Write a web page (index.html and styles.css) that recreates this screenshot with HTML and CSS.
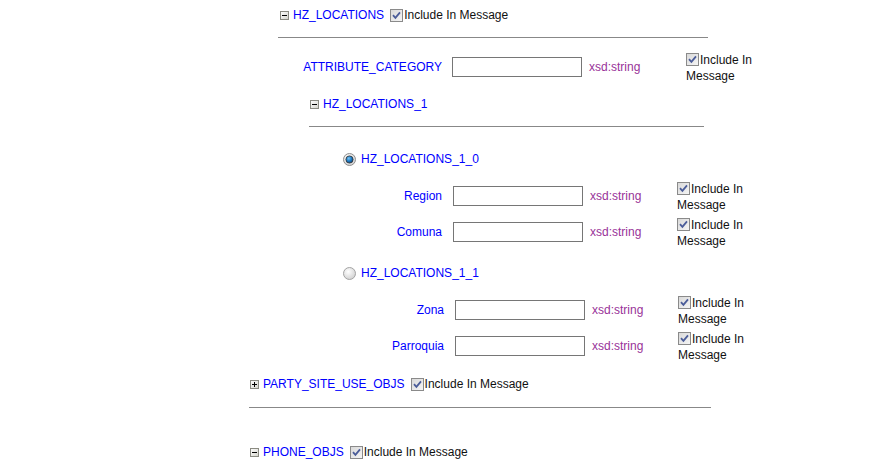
FILE: index.html
```html
<!DOCTYPE html>
<html lang="en">
<head>
  <meta charset="UTF-8">
  <title>Message Tester</title>
  <link rel="stylesheet" href="styles.css">
</head>
<body>
  <svg class="sprites" xmlns="http://www.w3.org/2000/svg">
    <defs>
      <linearGradient id="g-box" x1="0" y1="0" x2="1" y2="1">
        <stop offset="0" stop-color="#ffffff"/>
        <stop offset="1" stop-color="#d4d4cc"/>
      </linearGradient>
      <linearGradient id="g-check" x1="0" y1="0" x2="1" y2="1">
        <stop offset="0" stop-color="#d8d8d8"/>
        <stop offset="1" stop-color="#f6f6f6"/>
      </linearGradient>
      <radialGradient id="g-radio" cx="0.4" cy="0.35" r="0.7">
        <stop offset="0" stop-color="#ffffff"/>
        <stop offset="1" stop-color="#cfcfcf"/>
      </radialGradient>
      <radialGradient id="g-dot" cx="0.4" cy="0.35" r="0.7">
        <stop offset="0" stop-color="#7cc4f4"/>
        <stop offset="0.5" stop-color="#1f7fc8"/>
        <stop offset="1" stop-color="#0b3f75"/>
      </radialGradient>
      <symbol id="minus" viewBox="0 0 9 9">
        <rect x="0.5" y="0.5" width="8" height="8" fill="url(#g-box)" stroke="#8b8b82"/>
        <path d="M2 4.5H7" stroke="#000" stroke-width="1"/>
      </symbol>
      <symbol id="plus" viewBox="0 0 9 9">
        <rect x="0.5" y="0.5" width="8" height="8" fill="url(#g-box)" stroke="#8b8b82"/>
        <path d="M2 4.5H7M4.5 2V7" stroke="#000" stroke-width="1"/>
      </symbol>
      <symbol id="check" viewBox="0 0 13 13">
        <rect x="0.5" y="0.5" width="12" height="12" fill="url(#g-check)" stroke="#8a8a8a"/>
        <path d="M3 6.2L5.4 8.8L10 3.4" fill="none" stroke="#4a5c99" stroke-width="1.8"/>
      </symbol>
      <symbol id="radio-on" viewBox="0 0 13 13">
        <circle cx="6.5" cy="6.5" r="6" fill="url(#g-radio)" stroke="#8e8e8e"/>
        <circle cx="6.5" cy="6.5" r="3.6" fill="url(#g-dot)" stroke="#333" stroke-width="0.8"/>
      </symbol>
      <symbol id="radio-off" viewBox="0 0 13 13">
        <circle cx="6.5" cy="6.5" r="6" fill="url(#g-radio)" stroke="#a3a3a3"/>
      </symbol>
    </defs>
  </svg>

  <div class="tree">
    <div class="node lvl1">
      <div class="node-head">
        <svg class="toggle"><use href="#minus"/></svg>
        <span class="name">HZ_LOCATIONS</span>
        <span class="include"><svg class="check"><use href="#check"/></svg>Include In Message</span>
      </div>
      <div class="rule"></div>

      <div class="field attr">
        <span class="field-name">ATTRIBUTE_CATEGORY</span>
        <input type="text" class="field-input">
        <span class="field-type">xsd:string</span>
        <span class="field-include"><svg class="check"><use href="#check"/></svg>Include In Message</span>
      </div>

      <div class="node lvl2">
        <div class="node-head">
          <svg class="toggle"><use href="#minus"/></svg>
          <span class="name">HZ_LOCATIONS_1</span>
        </div>
        <div class="rule"></div>

        <div class="choice first">
          <svg class="radio"><use href="#radio-on"/></svg>
          <span class="name">HZ_LOCATIONS_1_0</span>
        </div>
        <div class="field sub">
          <span class="field-name">Region</span>
          <input type="text" class="field-input">
          <span class="field-type">xsd:string</span>
          <span class="field-include"><svg class="check"><use href="#check"/></svg>Include In Message</span>
        </div>
        <div class="field sub">
          <span class="field-name">Comuna</span>
          <input type="text" class="field-input">
          <span class="field-type">xsd:string</span>
          <span class="field-include"><svg class="check"><use href="#check"/></svg>Include In Message</span>
        </div>

        <div class="choice second">
          <svg class="radio"><use href="#radio-off"/></svg>
          <span class="name">HZ_LOCATIONS_1_1</span>
        </div>
        <div class="field sub alt">
          <span class="field-name">Zona</span>
          <input type="text" class="field-input">
          <span class="field-type">xsd:string</span>
          <span class="field-include"><svg class="check"><use href="#check"/></svg>Include In Message</span>
        </div>
        <div class="field sub alt">
          <span class="field-name">Parroquia</span>
          <input type="text" class="field-input">
          <span class="field-type">xsd:string</span>
          <span class="field-include"><svg class="check"><use href="#check"/></svg>Include In Message</span>
        </div>
      </div>
    </div>

    <div class="node lvl0 party">
      <div class="node-head">
        <svg class="toggle"><use href="#plus"/></svg>
        <span class="name">PARTY_SITE_USE_OBJS</span>
        <span class="include"><svg class="check"><use href="#check"/></svg>Include In Message</span>
      </div>
      <div class="rule wide"></div>
    </div>

    <div class="node lvl0 phone">
      <div class="node-head">
        <svg class="toggle"><use href="#minus"/></svg>
        <span class="name">PHONE_OBJS</span>
        <span class="include"><svg class="check"><use href="#check"/></svg>Include In Message</span>
      </div>
    </div>
  </div>
</body>
</html>
```

FILE: styles.css
```css
html, body {
  margin: 0;
  background-color: #fff;
}
body {
  font-family: "Liberation Sans", Arial, sans-serif;
  font-size: 12px;
  line-height: 14px;
  color: #000;
  overflow: hidden;
}
.sprites {
  display: block;
  width: 0;
  height: 0;
}
.tree {
  margin-left: 249px;
  width: 462px;
}
.lvl1 {
  margin-left: 29px;
  width: 430px;
}
.lvl2 {
  margin-left: 31px;
  margin-top: 3px;
  width: 395px;
}
.party {
  margin-top: 5px;
}
.phone {
  margin-top: 29px;
}
.node-head {
  box-sizing: border-box;
  height: 28px;
  padding-top: 2px;
  display: flex;
  align-items: center;
  padding-left: 1px;
}
.lvl1 > .node-head {
  padding-left: 2px;
}
.toggle {
  width: 9px;
  height: 9px;
  margin-right: 4px;
  flex: none;
}
.name {
  color: #0000ff;
  white-space: nowrap;
}
.include {
  display: flex;
  align-items: center;
  margin-left: 6px;
  white-space: nowrap;
  color: #111;
}
.check {
  width: 13px;
  height: 13px;
  margin-right: 1px;
  flex: none;
}
.rule {
  border-top: 1px solid #888;
  margin-top: 9px;
}
.rule.wide {
  margin-top: 10px;
}

/* field rows */
.field {
  display: flex;
  align-items: center;
  height: 36px;
}
.field.attr {
  height: 38px;
  margin-top: 10px;
}
.field-name {
  color: #0000ff;
  text-align: right;
  box-sizing: border-box;
  white-space: nowrap;
  flex: none;
}
.attr .field-name {
  width: 174px;
  padding-right: 10px;
}
.sub .field-name {
  width: 144px;
  padding-right: 11px;
}
.sub.alt .field-name {
  width: 146px;
}
.field-input {
  box-sizing: border-box;
  width: 130px;
  height: 20px;
  margin: 0;
  border: 1px solid #767676;
  padding: 1px 2px;
  font: inherit;
  flex: none;
}
.field-type {
  color: #993399;
  margin-left: 7px;
  box-sizing: border-box;
  flex: none;
}
.attr .field-type {
  width: 97px;
}
.sub .field-type {
  width: 87px;
}
.sub.alt .field-type {
  width: 86px;
}
.field-include {
  flex: none;
  width: 74px;
  line-height: 16px;
  padding-top: 2px;
  color: #111;
}
.field-include .check {
  vertical-align: -2px;
}

/* choice rows */
.choice {
  box-sizing: border-box;
  height: 28px;
  padding-top: 2px;
  display: flex;
  align-items: center;
  padding-left: 34px;
}
.choice.first {
  margin-top: 17px;
}
.choice.second {
  margin-top: 8px;
}
.choice + .field {
  margin-top: 6px;
}
.radio {
  width: 13px;
  height: 13px;
  margin-right: 5px;
  flex: none;
}
```
